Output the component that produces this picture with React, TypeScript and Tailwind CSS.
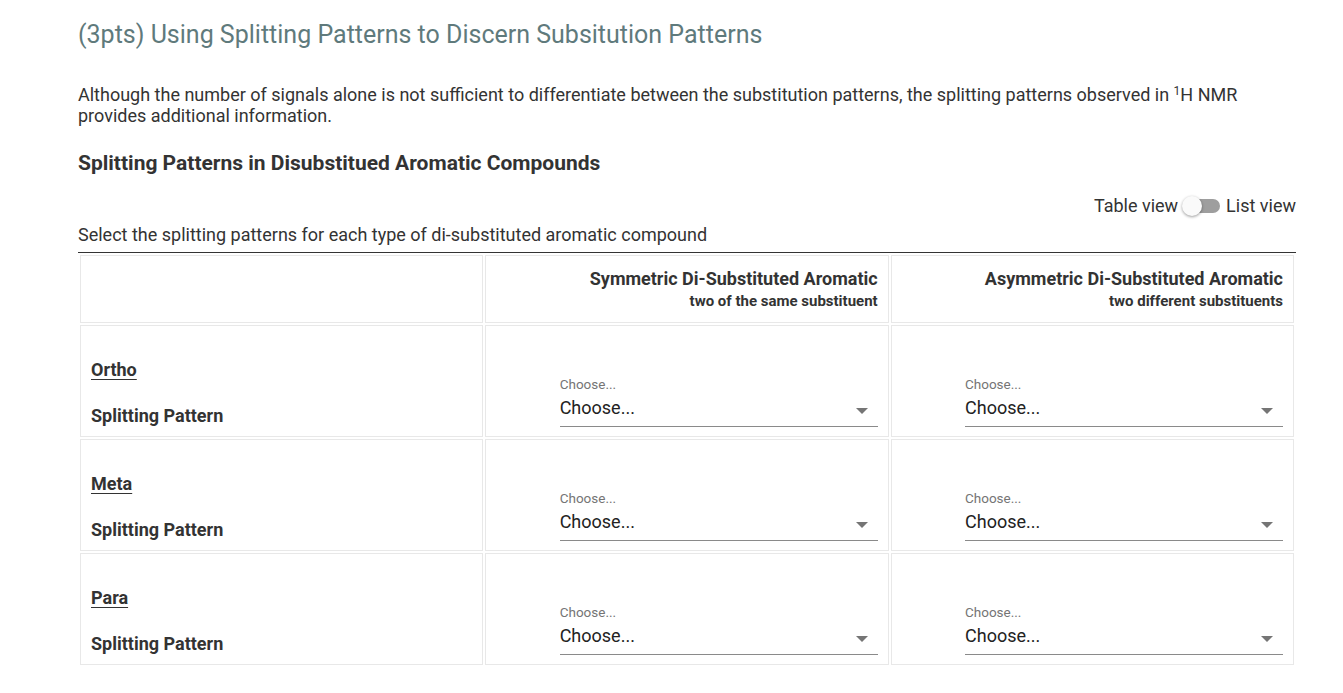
import { useState } from 'react'

const rows = ['Ortho', 'Meta', 'Para']

function Toggle({ on, onChange }: { on: boolean; onChange: () => void }) {
  return (
    <button onClick={onChange} className="relative mx-[6px] h-[14px] w-[36px] rounded-full bg-[#9e9e9e]">
      <span
        className={
          'absolute top-1/2 h-[20px] w-[20px] -translate-y-1/2 rounded-full bg-[#fafafa] shadow-[0_1px_3px_rgba(0,0,0,0.4)] ' +
          (on ? 'left-[17px]' : 'left-[-2px]')
        }
      />
    </button>
  )
}

function Select() {
  return (
    <div className="ml-auto w-[318px]">
      <div className="pb-[3px] text-[13.5px] leading-[18px] text-[#757575]">Choose...</div>
      <div className="flex items-center justify-between border-b border-[#8a8a8a] pb-[7px]">
        <span className="text-[18px] leading-[23px] text-[#222]">Choose...</span>
        <svg width="12" height="6" viewBox="0 0 12 6" className="mr-[10px] mt-[6px]">
          <path d="M0 0h12L6 6z" fill="#757575" />
        </svg>
      </div>
    </div>
  )
}

export default function App() {
  const [list, setList] = useState(false)
  return (
    <div className="min-h-screen bg-white font-['Roboto',sans-serif] text-[#333]">
      <div className="ml-[78px] w-[1218px] pt-[20px]">
        <h1 className="text-[25px] leading-[30px] text-[#5f7a7c]">
          (3pts) Using Splitting Patterns to Discern Subsitution Patterns
        </h1>
        <p className="mt-[34px] text-[18px] leading-[21px]">
          Although the number of signals alone is not sufficient to differentiate between the substitution patterns, the splitting patterns observed in{' '}
          <sup className="text-[12px] leading-none">1</sup>H NMR provides additional information.
        </p>
        <h2 className="mt-[24px] text-[21px] font-bold leading-[26px]">
          Splitting Patterns in Disubstitued Aromatic Compounds
        </h2>
        <div className="mt-[18px] flex items-center justify-end text-[18px] leading-[24px]">
          <span>Table view</span>
          <Toggle on={list} onChange={() => setList(!list)} />
          <span>List view</span>
        </div>
        <div className="mt-[5px] text-[18px] leading-[24px]">
          Select the splitting patterns for each type of di-substituted aromatic compound
        </div>
        <table className="mt-[5px] w-full table-fixed border-separate border-spacing-[2px] border-t-[1.5px] border-[#333]">
          <thead>
            <tr>
              <th className="h-[68px] border border-[#e8e8e8]" />
              <th className="h-[68px] border border-[#e8e8e8] px-[10px] text-right align-top">
                <div className="mt-[11px] text-[18px] font-bold leading-[24px]">Symmetric Di-Substituted Aromatic</div>
                <div className="text-[15px] font-bold leading-[20px]">two of the same substituent</div>
              </th>
              <th className="h-[68px] border border-[#e8e8e8] px-[10px] text-right align-top">
                <div className="mt-[11px] text-[18px] font-bold leading-[24px]">Asymmetric Di-Substituted Aromatic</div>
                <div className="text-[15px] font-bold leading-[20px]">two different substituents</div>
              </th>
            </tr>
          </thead>
          <tbody>
            {rows.map((r) => (
              <tr key={r}>
                <td className="h-[112px] border border-[#e8e8e8] px-[10px] pb-[8px] align-bottom">
                  <div className="text-[18px] font-bold leading-[24px] underline underline-offset-[3px]">{r}</div>
                  <div className="mt-[22px] text-[18px] font-bold leading-[24px]">Splitting Pattern</div>
                </td>
                <td className="h-[112px] border border-[#e8e8e8] px-[10px] pb-[9px] align-bottom">
                  <Select />
                </td>
                <td className="h-[112px] border border-[#e8e8e8] px-[10px] pb-[9px] align-bottom">
                  <Select />
                </td>
              </tr>
            ))}
          </tbody>
        </table>
      </div>
    </div>
  )
}
